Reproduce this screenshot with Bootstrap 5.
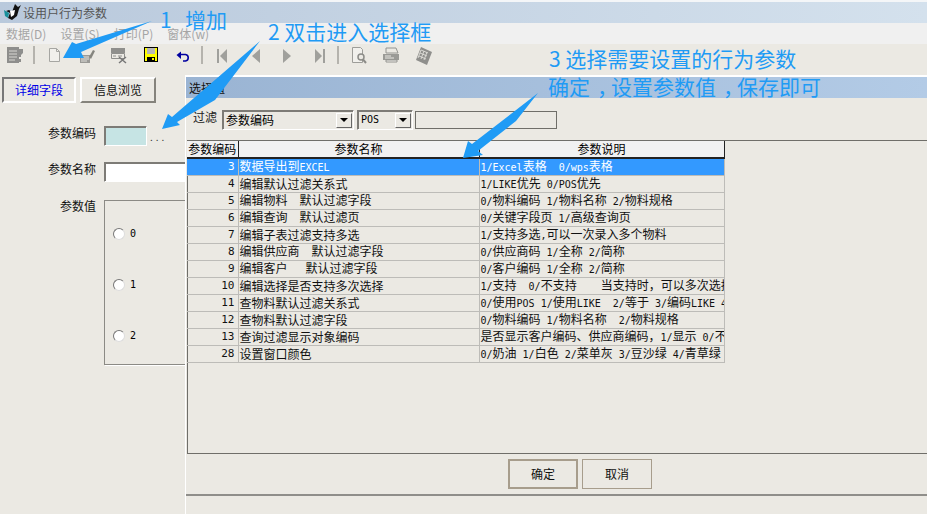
<!DOCTYPE html>
<html lang="zh">
<head>
<meta charset="utf-8">
<title>设用户行为参数</title>
<link href="https://cdn.jsdelivr.net/npm/bootstrap@5.3.0/dist/css/bootstrap.min.css" rel="stylesheet">
<style>
html,body{margin:0;height:514px;overflow:hidden}
body{width:927px;position:relative;background:#ebe9e3;color:#000;font:12px/1 "Noto Sans CJK SC",sans-serif}
.lat{font-family:"DejaVu Sans Mono",monospace;font-size:10px;white-space:pre}
.topline{height:2px;background:#f4f6f8}
.titlebar{height:21px;background:linear-gradient(90deg,#b9c9dc,#d4e1ed);color:#555;font-size:12px;gap:1px;padding-left:2px}
.menubar{height:21px;background:#f0f0f0;color:#a5a5a5;font-size:12px;gap:14px;padding-left:6px}
.toolbar{height:31px;padding:2px 0 0 5px;align-items:flex-start}
.tool{width:20px;height:20px;flex:none;display:block}
.toolsep{width:2px;height:18px;background:#b5b3ad;flex:none}
.m7{margin-left:7px}.m8{margin-left:8px}.m9{margin-left:9px}.m11{margin-left:11px}.m12{margin-left:12px}.m13{margin-left:13px}.m14{margin-left:14px}
.workarea{padding:2px 2px 0}
.tabbtn{height:26px;width:76px;border:2px solid;border-color:#fff #85837c #85837c #fff;background:#ebe9e3;font-size:12px;color:#111}
.tabbtn.onbtn{width:74px;color:#0000e6;border-color:#777 #fff #fff #777;outline:0}
.formrow{padding-left:46px;margin-top:23px;gap:8px}
.fieldlabel{font-size:12px;width:48px;text-align:right;color:#111}
.up3{position:relative;top:-3px}
.sunk{border:1px solid #fff;border-top-color:#7d7b76;border-left-color:#7d7b76;box-shadow:inset 1px 0 #7d7b76,inset 0 1px #7d7b76;height:20px}
.codebox{width:43px;background:#c6e4e4}
.namebox{width:100px;background:#fff}
.dots{letter-spacing:3px;color:#333;margin-left:-5px;align-self:flex-end;font-size:10px;padding-bottom:4px}
.valuebox{width:100px;height:165px;border:1px solid #8b8a85;box-shadow:1px 1px 0 #fff;padding:27px 0 0 8px;gap:39px}
.radioline{height:12px;gap:5px;font-size:11px}
.radiodot{width:12px;height:12px;border-radius:50%;background:#fff;border:1px solid #777;border-right-color:#ddd;border-bottom-color:#ddd}
.mt18{margin-top:18px}
.dialog{position:absolute;left:185px;top:75px;width:742px;height:439px;background:#ebe9e3;border-left:1px solid #fff;border-top:2px solid #fff}
.dlgtitle{height:21px;background:linear-gradient(90deg,#9ab4d3,#b3cbe6);padding-left:3px;font-size:12px;color:#111}
.filterrow{height:42px;padding:2px 0 0 7px}
.filterlabel{width:29px;font-size:12px;color:#222;padding-bottom:6px}
.combo{height:20px;background:#ebe9e3;border:1px solid;border-color:#7d7b76 #fff #fff #7d7b76;box-shadow:inset 1px 1px 0 #7d7b76;padding-left:3px;font-size:12px;margin-right:3px}
.combo1{width:132px}.combo2{width:56px}
.dropbtn{width:16px;height:15px;margin:0 1px 0 auto;background:#ebe9e3;border:1px solid;border-color:#fff #666 #666 #fff;flex:none}
.dropbtn i{border:4px solid transparent;border-top:4px solid #000;border-bottom:0;display:block}
.plainbox{width:142px;height:18px;border:1px solid #6f6e69;margin:0 0 1px -1px}
.gridwrap{height:314px;border-top:1px solid #6f6e69;border-left:1px solid #6f6e69;border-bottom:1px solid #6f6e69;margin-left:1px}
.datagrid{border-collapse:collapse;table-layout:fixed;width:537px;font-size:12px;margin:0 0 0 -1px}
.datagrid th{height:17px;background:#f1f1f1;font-weight:400;text-align:center;border-right:1px solid #222;border-bottom:2px solid #222;padding:0;overflow:hidden;white-space:nowrap}
.datagrid td{height:17px;padding:0 0 0 1px;border-right:1px solid #bdbcb8;border-bottom:1px solid #bdbcb8;overflow:hidden;white-space:nowrap;color:#111}
.datagrid td:first-child{text-align:right;padding-right:3px;font-family:"DejaVu Sans Mono",monospace;font-size:11px}
.datagrid tr.picked td{background:#3399ff;color:#fff}
.col1{width:51px}.col2{width:241px}.col3{width:245px}
.dlgactions{height:40px;gap:4px;padding-left:322px;padding-top:5px}
.wbtn{width:70px;height:30px;background:#ebe9e3;border:1px solid #a79d8c;font-size:12px;color:#111}
.wbtn.primary1{border-width:2px}
.dlgfoot{border-top:2px solid #8f8e8a}
.overlay{position:absolute;left:0;top:0;pointer-events:none}
.note{position:absolute;color:#1f9bf5;white-space:pre;font-size:21px;line-height:1.1}
.cm{display:inline-block;transform:translateX(7px)}
.n1{left:160px;top:8px}.n2{left:268px;top:20px}.n3{left:549px;top:47px}.n4{left:548px;top:75px}
</style>
</head>
<body>
<div class="topline"></div>
<div class="titlebar d-flex align-items-center">
<svg width="20" height="20" viewBox="0 0 20 20"><path d="M13 1l3 3 3-2-2 4-2 7-5 4-4-2 2-5-4-2 3-1 3 2z" fill="#111"/><path d="M2 7l5 3-1 5-3-2z" fill="#17909a"/><path d="M8 8l5-1-1 5-3 2z" fill="#fff"/></svg>
<span>设用户行为参数</span>
</div>
<div class="menubar d-flex align-items-center"><span>数据(D)</span><span>设置(S)</span><span>打印(P)</span><span>窗体(w)</span></div>
<div class="toolbar d-flex">
<svg class="tool" viewBox="0 0 20 20"><path d="M2 1h12v16H2z" fill="#8e8e8c"/><path d="M4 5h8M4 8h8M4 11h8M4 14h6" stroke="#d8d7d2"/><path d="M14 3h4v4l-2 2v2h-2zM14 13h2v3h-2z" fill="#8e8e8c"/></svg>
<div class="toolsep m8"></div>
<svg class="tool m9" viewBox="0 0 20 20"><path d="M5.5 2.5h7l3 3v10h-10z" fill="#f1f0ec" stroke="#a6a6a2"/><path d="M12.5 2.5v3h3" fill="none" stroke="#a6a6a2"/></svg>
<svg class="tool m11" viewBox="0 0 20 20"><path d="M5 9h10v8H5z" fill="#9a9a97"/><path d="M6 11h8M6 13h8M6 15h6" stroke="#e0dfda"/><path d="M14 11l4-7 2 1-4 8z" fill="#85857f"/></svg>
<svg class="tool m13" viewBox="0 0 20 20"><path d="M3 2h14v5H3z" fill="#8f8f8c"/><path d="M3.500 7.500h13v5h-13z" fill="#ebe9e3" stroke="#8f8f8c"/><path d="M5 10h3M10 10h4" stroke="#8f8f8c"/><path d="M11 11l7 6M18 11l-7 6" stroke="#777" stroke-width="1.500"/></svg>
<svg class="tool m13" viewBox="0 0 20 20"><path d="M3 1h14v15H3z" fill="#000"/><path d="M4 2h12v13H4z" fill="#ffff00"/><path d="M6 2h8v6H6z" fill="#b8b8b8"/><path d="M6 11h8v4H6z" fill="#000"/><path d="M11 12h2v2h-2z" fill="#ffff00"/></svg>
<svg class="tool m12" viewBox="0 0 20 20"><path d="M7 8.500h5.500a3.300 3.300 0 0 1 0 6.500H10" fill="none" stroke="#0000a0" stroke-width="1.600"/><path d="M3.500 9L8 5.500V13z" fill="#0000a0"/></svg>
<div class="toolsep m8"></div>
<svg class="tool m9" viewBox="0 0 20 20"><path d="M5 3h2v14H5z" fill="#a0a09c"/><path d="M15 3v14L8 10z" fill="#a0a09c"/></svg>
<svg class="tool m13" viewBox="0 0 20 20"><path d="M15 3v14L7 10z" fill="#a0a09c"/></svg>
<svg class="tool m11" viewBox="0 0 20 20"><path d="M7 3v14l8-7z" fill="#a0a09c"/></svg>
<svg class="tool m14" viewBox="0 0 20 20"><path d="M5 3v14l7-7z" fill="#a0a09c"/><path d="M13 3h2v14h-2z" fill="#a0a09c"/></svg>
<div class="toolsep m7"></div>
<svg class="tool m9" viewBox="0 0 20 20"><path d="M4.500 1.500h8l2 2v13h-10z" fill="#f1f0ec" stroke="#9d9d99"/><circle cx="13" cy="11" r="3" fill="#ebe9e3" stroke="#8c8c88" stroke-width="1.500"/><path d="M15 13.500l3 3.500" stroke="#8c8c88" stroke-width="2"/></svg>
<svg class="tool m13" viewBox="0 0 20 20"><path d="M5 2h10l2 5H5z" fill="#ebe9e3" stroke="#949490"/><path d="M2 8h16v6H2z" fill="#9a9a96"/><path d="M4 10h6M4 12h9" stroke="#e8e7e2"/><path d="M5 14h11v2H5z" fill="#f1f0ec" stroke="#949490"/></svg>
<svg class="tool m12" viewBox="0 0 20 20"><path d="M8 1l11 5-5 13L3 14z" fill="#8f8f8c"/><path d="M8 4l7 3M7 7l7 3M6 10l7 3M8 4l-3 8M11 5l-3 8M14 6l-3 8" stroke="#d9d8d3"/></svg>
</div>
<div class="workarea">
<div class="d-flex gap-1"><button class="tabbtn onbtn p-0">详细字段</button><button class="tabbtn p-0">信息浏览</button></div>
<div class="formrow d-flex align-items-center"><span class="fieldlabel up3">参数编码</span><div class="sunk codebox"></div><span class="dots">...</span></div>
<div class="formrow d-flex align-items-center mt-3"><span class="fieldlabel up3">参数名称</span><div class="sunk namebox"></div></div>
<div class="formrow d-flex mt18"><span class="fieldlabel">参数值</span>
<div class="valuebox d-flex flex-column"><div class="radioline d-flex align-items-center"><span class="radiodot"></span><span class="lat">0</span></div><div class="radioline d-flex align-items-center"><span class="radiodot"></span><span class="lat">1</span></div><div class="radioline d-flex align-items-center"><span class="radiodot"></span><span class="lat">2</span></div></div></div>
</div>
<section class="dialog d-flex flex-column">
<div class="dlgtitle d-flex align-items-center">选择值</div>
<div class="filterrow d-flex align-items-center">
<span class="filterlabel">过滤</span>
<div class="combo combo1 d-flex align-items-center"><span>参数编码</span><span class="dropbtn d-flex align-items-center justify-content-center"><i></i></span></div>
<div class="combo combo2 d-flex align-items-center"><span class="lat">POS</span><span class="dropbtn d-flex align-items-center justify-content-center"><i></i></span></div>
<div class="plainbox"></div>
</div>
<div class="gridwrap">
<table class="datagrid"><colgroup><col class="col1"><col class="col2"><col class="col3"></colgroup>
<thead><tr><th>参数编码</th><th>参数名称</th><th>参数说明</th></tr></thead>
<tbody>
<tr class="picked"><td>3</td><td>数据导出到<span class="lat">EXCEL</span></td><td><span class="lat">1/Excel</span>表格<span class="lat">  0/wps</span>表格</td></tr>
<tr><td>4</td><td>编辑默认过滤关系式</td><td><span class="lat">1/LIKE</span>优先<span class="lat"> 0/POS</span>优先</td></tr>
<tr><td>5</td><td>编辑物料<span class="lat">  </span>默认过滤字段</td><td><span class="lat">0/</span>物料编码<span class="lat"> 1/</span>物料名称<span class="lat"> 2/</span>物料规格</td></tr>
<tr><td>6</td><td>编辑查询<span class="lat">  </span>默认过滤页</td><td><span class="lat">0/</span>关键字段页<span class="lat"> 1/</span>高级查询页</td></tr>
<tr><td>7</td><td>编辑子表过滤支持多选</td><td><span class="lat">1/</span>支持多选<span class="lat">,</span>可以一次录入多个物料</td></tr>
<tr><td>8</td><td>编辑供应商<span class="lat">  </span>默认过滤字段</td><td><span class="lat">0/</span>供应商码<span class="lat"> 1/</span>全称<span class="lat"> 2/</span>简称</td></tr>
<tr><td>9</td><td>编辑客户<span class="lat">   </span>默认过滤字段</td><td><span class="lat">0/</span>客户编码<span class="lat"> 1/</span>全称<span class="lat"> 2/</span>简称</td></tr>
<tr><td>10</td><td>编辑选择是否支持多次选择</td><td><span class="lat">1/</span>支持<span class="lat">  0/</span>不支持<span class="lat">    </span>当支持时，可以多次选择</td></tr>
<tr><td>11</td><td>查物料默认过滤关系式</td><td><span class="lat">0/</span>使用<span class="lat">POS 1/</span>使用<span class="lat">LIKE  2/</span>等于<span class="lat"> 3/</span>编码<span class="lat">LIKE 4</span></td></tr>
<tr><td>12</td><td>查物料默认过滤字段</td><td><span class="lat">0/</span>物料编码<span class="lat"> 1/</span>物料名称<span class="lat">  2/</span>物料规格</td></tr>
<tr><td>13</td><td>查询过滤显示对象编码</td><td>是否显示客户编码、供应商编码，<span class="lat">1/</span>显示<span class="lat"> 0/</span>不显示</td></tr>
<tr><td>28</td><td>设置窗口颜色</td><td><span class="lat">0/</span>奶油<span class="lat"> 1/</span>白色<span class="lat"> 2/</span>菜单灰<span class="lat"> 3/</span>豆沙绿<span class="lat"> 4/</span>青草绿</td></tr>
</tbody></table>
</div>
<div class="dlgactions d-flex"><button class="wbtn primary1 p-0">确定</button><button class="wbtn p-0">取消</button></div>
<div class="dlgfoot"></div>
</section>
<svg class="overlay" width="927" height="514" viewBox="0 0 927 514">
<path d="M152 21L76 44 72 42 63 58 84 58 81 52z" fill="#1f9bf5"/>
<path d="M260 41L172 117 168 114 162 129 180 125 177 122 215 100z" fill="#1f9bf5"/>
<path d="M538 93L472 144 468 141 463 158 483 155 478 151 516 121z" fill="#1f9bf5"/>
</svg>
<div class="note n1">1  <span class="ms-1">增加</span></div>
<div class="note n2">2 双击进入选择框</div>
<div class="note n3">3 选择需要设置的行为参数</div>
<div class="note n4">确定<span class="cm">，</span>设置参数值<span class="cm">，</span>保存即可</div>
<script src="https://cdn.jsdelivr.net/npm/bootstrap@5.3.0/dist/js/bootstrap.bundle.min.js"></script>
</body>
</html>
